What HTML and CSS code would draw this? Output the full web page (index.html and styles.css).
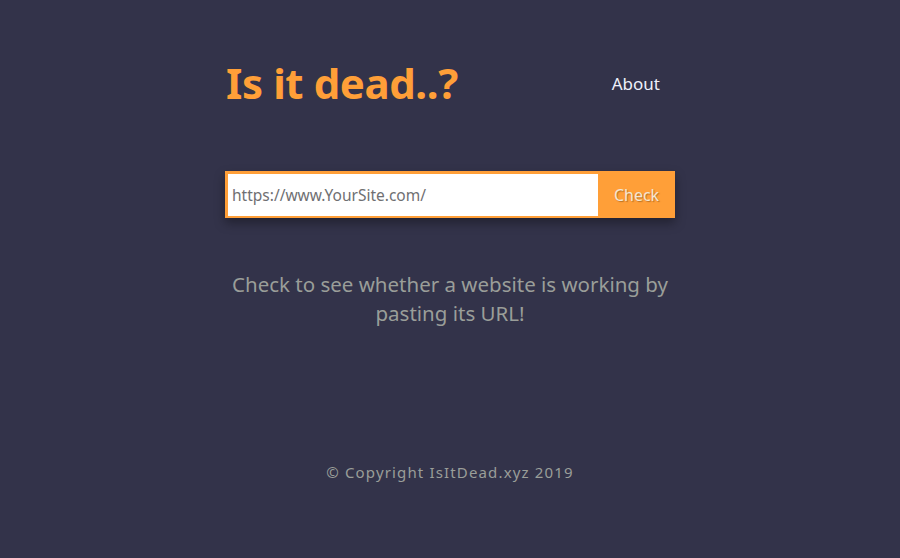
FILE: index.html
```html
<!DOCTYPE html>
<html>
<head>
<meta charset="utf-8">
<link rel="stylesheet" href="styles.css">
</head>
<body>
<div class="wrap">
  <header class="header">
    <h1 class="title">Is it dead..?</h1>
    <a class="about" href="#">About</a>
  </header>
  <form class="search">
    <input class="url" type="text" placeholder="https://www.YourSite.com/">
    <button class="check" type="button">Check</button>
  </form>
  <p class="desc">Check to see whether a website is working by pasting its URL!</p>
  <footer class="footer">© Copyright IsItDead.xyz 2019</footer>
</div>
</body>
</html>
```
FILE: styles.css
```css
html, body {
  margin: 0;
  padding: 0;
  background: #33334a;
  font-family: "Noto Sans", "Open Sans", sans-serif;
}
.wrap {
  width: 450px;
  margin: 0 auto;
  display: flex;
  flex-direction: column;
}
.header {
  display: flex;
  justify-content: space-between;
  align-items: center;
  padding: 58px 15px 0 1px;
  height: 50px;
}
.title {
  margin: 0;
  font-size: 42px;
  line-height: 50px;
  font-weight: 700;
  color: #ff9f38;
  letter-spacing: -0.4px;
}
.about {
  color: #eef0fa;
  font-size: 17px;
  text-decoration: none;
}
.search {
  margin: 63px 0 0 0;
  display: flex;
  height: 47px;
  box-sizing: border-box;
  border: 3px solid #ff9f38;
  border-bottom-width: 2px;
  border-right-width: 0;
  background: #ff9f38;
  box-shadow: 0 5px 10px rgba(0,0,0,0.35);
}
.url {
  flex: 1;
  border: 0;
  margin: 0;
  padding: 0 4px;
  font-family: inherit;
  font-size: 15.5px;
  color: #666;
  background: #fff;
  outline: none;
}
.url::placeholder {
  color: #6f6f72;
}
.check {
  width: 77px;
  border: 0;
  background: #ff9f38;
  color: #f3e6d3;
  font-family: inherit;
  font-size: 16px;
  text-shadow: 1px 1px 1px rgba(120,70,20,0.5);
  padding: 0;
}
.desc {
  margin: 52px 0 0 0;
  text-align: center;
  color: #9a9e99;
  font-size: 20.5px;
  line-height: 29px;
}
.footer {
  margin-top: 134px;
  text-align: center;
  color: #9a9e99;
  font-size: 15px;
  letter-spacing: 1.15px;
}
```
